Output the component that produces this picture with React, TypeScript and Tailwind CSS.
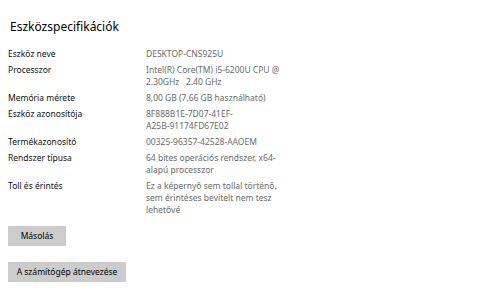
import React from 'react'

const specs: { label: string; lines: string[] }[] = [
  { label: 'Eszköz neve', lines: ['DESKTOP-CNS925U'] },
  { label: 'Processzor', lines: ['Intel(R) Core(TM) i5-6200U CPU @', '2.30GHz   2.40 GHz'] },
  { label: 'Memória mérete', lines: ['8,00 GB (7,66 GB használható)'] },
  { label: 'Eszköz azonosítója', lines: ['8F888B1E-7D07-41EF-', 'A25B-91174FD67E02'] },
  { label: 'Termékazonosító', lines: ['00325-96357-42528-AAOEM'] },
  { label: 'Rendszer típusa', lines: ['64 bites operációs rendszer, x64-', 'alapú processzor'] },
  { label: 'Toll és érintés', lines: ['Ez a képernyő sem tollal történő,', 'sem érintéses bevitelt nem tesz', 'lehetővé'] },
]

const App: React.FC = () => {
  return (
    <div className="w-[499px] h-[290px] bg-white overflow-hidden px-2 pt-[19px] font-['Noto_Sans',sans-serif] text-black">
      <h1 className="text-[12px] leading-[16px] font-normal pl-[2px]">Eszközspecifikációk</h1>
      <div className="mt-[13px] flex flex-col gap-[4px]">
        {specs.map((s) => (
          <div key={s.label} className="grid grid-cols-[138px_150px] text-[8.5px] leading-[12px]">
            <span className="text-[#111111]">{s.label}</span>
            <span className="text-[#6b6b6b] whitespace-pre">
              {s.lines.map((l) => (
                <span key={l} className="block">{l}</span>
              ))}
            </span>
          </div>
        ))}
      </div>
      <div className="mt-[10px] flex flex-col items-start gap-[16px]">
        <button className="h-[20px] w-[58px] bg-[#cccccc] text-[8.5px] text-black">Másolás</button>
        <button className="h-[20px] w-[118px] bg-[#cccccc] text-[8.5px] text-black">A számítógép átnevezése</button>
      </div>
    </div>
  )
}

export default App
